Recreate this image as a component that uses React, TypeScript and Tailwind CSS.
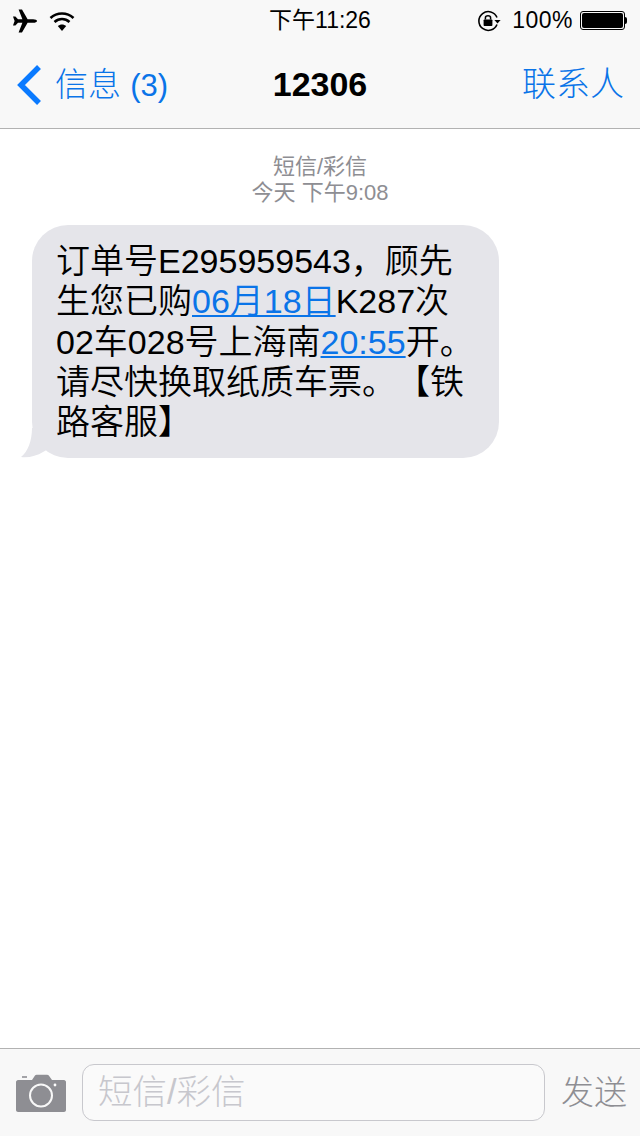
const font = { fontFamily: '"Liberation Sans", "Noto Sans CJK SC", sans-serif' }

function AirplaneIcon() {
  return (
    <svg width="26" height="24" viewBox="0 0 26 24" className="fill-black">
      <path d="M1 7.4 L3.4 7.4 L6 10.2 L10.4 10.2 L6.6 0.6 L10 0.6 L15.6 10.2 L21 10.2 C23.4 10.2 25 11 25 12 C25 13 23.4 13.8 21 13.8 L15.6 13.8 L10 23.4 L6.6 23.4 L10.4 13.8 L6 13.8 L3.4 16.6 L1 16.6 L2.6 12 Z" />
    </svg>
  )
}

function WifiIcon() {
  return (
    <svg width="26" height="20" viewBox="0 0 26 20" fill="none" className="stroke-black">
      <path d="M1.5 7 C8 1 18 1 24.5 7" strokeWidth="2.6" />
      <path d="M5.5 11 C10 7 16 7 20.5 11" strokeWidth="2.6" />
      <path d="M13 20 L8.8 15 C11 12.9 15 12.9 17.2 15 Z" className="fill-black" stroke="none" />
    </svg>
  )
}

function RotationLockIcon() {
  return (
    <svg width="24" height="22" viewBox="0 0 24 22" fill="none">
      <path d="M20 7.5 A9.4 9.4 0 1 0 20 14.5" stroke="#000" strokeWidth="1.6" />
      <path d="M17.4 10 L23.6 10 L20.5 13.6 Z" fill="#000" />
      <rect x="6.6" y="9.4" width="8.8" height="6.6" rx="0.8" fill="#000" />
      <path d="M8.4 9.6 V7.8 C8.4 5.2 13.6 5.2 13.6 7.8 V9.6" stroke="#000" strokeWidth="1.5" />
    </svg>
  )
}

function BatteryIcon() {
  return (
    <div className="flex items-center">
      <div className="h-[19px] w-[45px] rounded-[3px] border border-black p-px">
        <div className="h-full w-full rounded-[2px] bg-black" />
      </div>
      <div className="h-[7px] w-[2px] rounded-r-sm bg-black" />
    </div>
  )
}

function CameraIcon() {
  return (
    <svg width="50" height="38" viewBox="0 0 50 38">
      <path
        fillRule="evenodd"
        fill="#8e8e93"
        d="M2 6 H16 L19 1.5 C19.4 1 20 0.7 20.6 0.7 H31 C31.8 0.7 32.4 1 32.8 1.6 L36 6 H48 C49 6 50 7 50 8 V36 C50 37 49 38 48 38 H2 C1 38 0 37 0 36 V8 C0 7 1 6 2 6 Z M25 9.5 A12 12 0 1 0 25 33.5 A12 12 0 1 0 25 9.5 Z M25 11.5 A10 10 0 1 1 25 31.5 A10 10 0 1 1 25 11.5 Z"
      />
      <rect x="6" y="2.2" width="5" height="1.6" fill="#8e8e93" />
      <circle cx="39" cy="11" r="1.4" fill="#fff" />
    </svg>
  )
}

function Link({ children }: { children: string }) {
  return <span className="text-[#0a74e8] underline decoration-2 underline-offset-2">{children}</span>
}

export default function App() {
  return (
    <div
      className="flex h-[1136px] w-[640px] flex-col overflow-hidden bg-white font-light text-black [text-spacing-trim:space-all]"
      style={font}
    >
      <header className="flex h-[129px] flex-col border-b border-[#b2b2b2] bg-[#f8f8f8]">
        <div className="grid h-[40px] grid-cols-3 items-center px-3 pt-[1px] text-[23px] font-normal">
          <div className="flex items-center gap-[11px]">
            <AirplaneIcon />
            <WifiIcon />
          </div>
          <div className="text-center whitespace-nowrap">下午11:26</div>
          <div className="flex items-center justify-end gap-[11px] pr-[1px]">
            <RotationLockIcon />
            <div className="flex items-center gap-[7px]">
              <span className="tracking-[0.5px]">100%</span>
              <BatteryIcon />
            </div>
          </div>
        </div>
        <div className="grid flex-1 grid-cols-3 items-center px-4 pt-[1px]">
          <div className="flex items-center gap-[13px] text-[#0a74e8]">
            <svg width="26" height="40" viewBox="0 0 26 40" fill="none" className="stroke-[#0a7aff]">
              <path d="M23 2 L5 20 L23 38" strokeWidth="5.5" />
            </svg>
            <span className="text-[33px] whitespace-nowrap">
              信息 <span className="text-[31px]">(3)</span>
            </span>
          </div>
          <div className="text-center text-[34px] font-bold">12306</div>
          <div className="text-right text-[34px] text-[#0a74e8]">联系人</div>
        </div>
      </header>

      <main className="flex-1 pt-[25px]">
        <div className="text-center text-[22px] leading-[26px] font-normal text-[#8e8e93]">
          <div>短信/彩信</div>
          <div>今天 下午9:08</div>
        </div>
        <div className="relative mt-[19px] ml-[32px] w-[467px] rounded-[36px] bg-[#e5e5ea] pt-[16px] pr-[25px] pb-[16px] pl-[24px] text-[34px] leading-[40.3px] font-[350] whitespace-nowrap">
          <div>订单号E295959543，顾先</div>
          <div>
            生您已购<Link>06月18日</Link>K287次
          </div>
          <div>
            02车028号上海南<Link>20:55</Link>开。
          </div>
          <div>请尽快换取纸质车票。【铁</div>
          <div>路客服】</div>
          <svg width="30" height="30" viewBox="0 0 30 30" className="absolute bottom-0 left-[-12px] fill-[#e5e5ea]">
            <path d="M12 0 C12 12 8 24 1 29 C8 30 17 28 23 24 L30 20 L30 0 Z" />
          </svg>
        </div>
      </main>

      <footer className="flex h-[88px] items-center border-t border-[#b2b2b2] bg-[#f8f8f8] pr-[13px] pl-[16px]">
        <CameraIcon />
        <div className="ml-[16px] flex h-[57px] w-[463px] items-center rounded-[12px] border border-[#c8c8cd] bg-[#fafafa] pl-[15px] text-[34.5px] text-[#c7c7cd]">
          短信/彩信
        </div>
        <div className="ml-auto text-[33px] whitespace-nowrap text-[#8e8e93]">发送</div>
      </footer>
    </div>
  )
}
